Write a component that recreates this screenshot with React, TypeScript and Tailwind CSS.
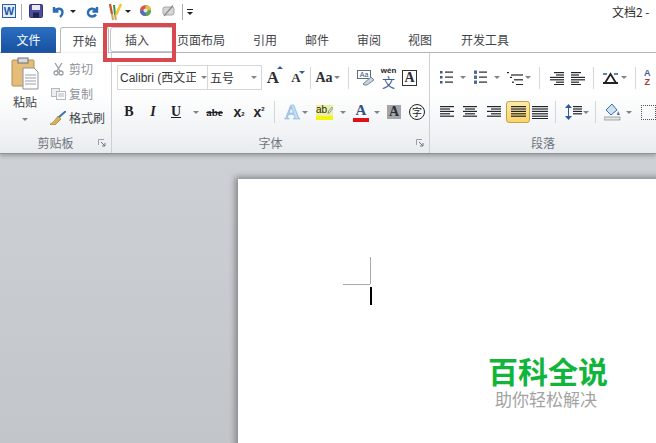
import React from "react";

const Caret = ({ className = "" }: { className?: string }) => (
  <span className={`block w-0 h-0 shrink-0 border-x-[3px] border-x-transparent border-t-[3px] border-t-[#7f8489] ${className}`} />
);

const Sep = ({ className = "" }: { className?: string }) => (
  <span className={`block w-px h-[22px] shrink-0 bg-[#d3d6da] ${className}`} />
);

const Launcher = () => (
  <svg width="8" height="8" viewBox="0 0 8 8">
    <path d="M0.5 6V0.5H6" stroke="#9aa0a6" fill="none" />
    <path d="M3 3L7 7M7 4V7H4" stroke="#6f767d" fill="none" />
  </svg>
);

// lines like the paragraph buttons: each item is x1,x2
const Lines = ({ rows, w = 15 }: { rows: [number, number][]; w?: number }) => (
  <svg className="block" width={w} height="14" viewBox={`0 0 ${w} 14`}>
    {rows.map(([a, b], i) => (
      <rect key={i} x={a} y={1 + i * 2.4} width={b - a} height="1.2" fill="#22262b" />
    ))}
  </svg>
);

const ListIcon = ({ kind }: { kind: "bullet" | "num" }) => (
  <svg className="block" width="13" height="15" viewBox="0 0 13 15">
    {[2, 7, 12].map((y) =>
      kind === "bullet" ? (
        <rect key={y} x="0" y={y - 1} width="2.5" height="2.5" fill="#3d5a80" />
      ) : (
        <rect key={y} x="0" y={y - 1.5} width="3" height="3.4" fill="#4c6a98" />
      )
    )}
    {[2, 7, 12].map((y) => (
      <rect key={y} x="5" y={y - 0.5} width="8" height="1.2" fill="#22262b" />
    ))}
  </svg>
);

const TopIcons = () => (
  <div className="flex items-center h-[26px] shrink-0 pl-[2px]">
    <div className="w-[14px] h-[14px] mt-[-4px] bg-[#e4edf8] border border-[#2a5fa8] flex items-center justify-center text-[11px] font-bold text-[#1d56a5] leading-none [font-family:'Liberation_Sans',sans-serif]">
      W
    </div>
    <span className="block w-px h-[16px] mt-[-2px] ml-[5px] bg-[#a9aeb5]" />
    <svg className="ml-[7px] mt-[-4px]" width="14" height="14" viewBox="0 0 14 14">
      <rect x="0.5" y="0.5" width="13" height="13" rx="1" fill="#4d4f9b" stroke="#31346f" />
      <rect x="3" y="1" width="8" height="5" fill="#e7e9f5" />
      <rect x="4" y="8.5" width="6" height="5" fill="#1f2250" />
    </svg>
    <svg className="ml-[9px] mt-[-4px]" width="13" height="13" viewBox="0 0 13 13">
      <path d="M2 2V6.5H6.5M2.5 6C5 2.5 10.5 3 10.5 7.5C10.5 9.5 9.5 10.8 8 12" stroke="#2b6cb5" strokeWidth="2.4" fill="none" />
    </svg>
    <Caret className="ml-[5px] mt-[-3px] border-t-[#222]" />
    <svg className="ml-[10px] mt-[-4px]" width="13" height="13" viewBox="0 0 13 13">
      <path d="M11 2V6.5H6.5M10.5 6C8 2.5 3 3 2 7C1.5 9.5 3.5 11.5 6 11.5C7.5 11.5 9 11 10 9.5" stroke="#2b6cb5" strokeWidth="2.4" fill="none" />
    </svg>
    <svg className="ml-[8px] mt-[-2px]" width="16" height="18" viewBox="0 0 16 18">
      <path d="M3 1L5 11" stroke="#c0562a" strokeWidth="2.2" />
      <path d="M7 2L8 12" stroke="#3f8f4e" strokeWidth="2" />
      <path d="M14 1L9 12" stroke="#f0c832" strokeWidth="2.6" />
      <path d="M5 11L6 17M8 12L9 17" stroke="#c9a75f" strokeWidth="2" />
    </svg>
    <Caret className="ml-[2px] mt-[-3px] border-t-[#222]" />
    <svg className="ml-[9px] mt-[-6px]" width="11" height="11" viewBox="0 0 11 11">
      <circle cx="5.5" cy="5.5" r="5.5" fill="#d9534f" />
      <path d="M5.5 5.5L5.5 0A5.5 5.5 0 0 1 11 5.5Z" fill="#e0c23a" />
      <path d="M5.5 5.5L11 5.5A5.5 5.5 0 0 1 5.5 11Z" fill="#4caf50" />
      <path d="M5.5 5.5L5.5 11A5.5 5.5 0 0 1 0 5.5Z" fill="#4b6fc9" />
      <circle cx="5.5" cy="5.5" r="2" fill="#e9e2ee" />
    </svg>
    <svg className="ml-[11px] mt-[-4px]" width="13" height="12" viewBox="0 0 13 12">
      <rect x="1" y="2" width="11" height="8" rx="2" fill="#d6d6d6" stroke="#a5a5a5" />
      <path d="M2 11L11 0.5" stroke="#8b8b8b" strokeWidth="1.2" />
    </svg>
    <span className="block w-px h-[16px] mt-[-2px] ml-[7px] bg-[#a9aeb5]" />
    <div className="ml-[4px] mt-[-2px] flex flex-col items-center gap-[2px]">
      <span className="block w-[6px] h-px bg-[#222]" />
      <Caret className="border-t-[#222]" />
    </div>
    <div className="ml-auto text-[12px] text-[#2d2d2d] whitespace-nowrap mt-[-2px] w-[44px]">
      文档2 -
    </div>
  </div>
);

const Tabs = () => {
  const plain = [
    { t: "页面布局", c: "w-[48px] ml-[1px]" },
    { t: "引用", c: "w-[24px] ml-[28px]" },
    { t: "邮件", c: "w-[24px] ml-[28px]" },
    { t: "审阅", c: "w-[24px] ml-[28px]" },
    { t: "视图", c: "w-[24px] ml-[27px]" },
    { t: "开发工具", c: "w-[48px] ml-[29px]" },
  ];
  return (
    <div className="flex items-end h-[27px] shrink-0 pl-px border-b border-[#b6babf] text-[12px] text-[#3f4448] leading-none">
      <div className="w-[55px] h-[26px] mb-[-1px] rounded-t-[3px] bg-gradient-to-b from-[#2b6fc2] to-[#17509f] text-white flex items-center justify-center">
        文件
      </div>
      <div className="ml-[4px] w-[49px] h-[26px] mb-[-1px] bg-white rounded-t-[3px] border border-b-0 border-[#b6babf] flex items-center justify-center">
        开始
      </div>
      <div className="ml-[1px] w-[66px] h-[25px] bg-white rounded-[3px] border border-[#c4c8cd] flex items-center pl-[14px]">
        插入
      </div>
      {plain.map((p) => (
        <div key={p.t} className={`h-[25px] flex items-center shrink-0 ${p.c}`}>
          {p.t}
        </div>
      ))}
    </div>
  );
};

const GroupLabel = ({ children, launcher }: { children: React.ReactNode; launcher?: boolean }) => (
  <div className="absolute left-0 right-0 bottom-0 h-[20px] flex items-center justify-center text-[12px] text-[#6f757c] leading-none">
    {children}
    {launcher && (
      <span className="absolute right-[5px] top-[6px]">
        <Launcher />
      </span>
    )}
  </div>
);

const ClipRow = ({ icon, label }: { icon: React.ReactNode; label: string }) => (
  <div className="flex items-center h-[24.5px]">
    <span className="w-[16px] flex justify-center">{icon}</span>
    <span className={`ml-[3px] text-[12px] leading-none ${label === "格式刷" ? "text-[#3f4448]" : "text-[#8d9298]"}`}>{label}</span>
  </div>
);

const Clipboard = () => (
  <div className="relative w-[112px] h-full border-r border-[#ccd0d5] shrink-0">
    <div className="flex pt-[4px] pl-[11px]">
      <div className="w-[28px] flex flex-col items-center">
        <svg width="28" height="33" viewBox="0 0 28 33">
          <rect x="1" y="3" width="22" height="26" rx="1" fill="#e5bd7a" stroke="#b58d4f" />
          <rect x="7" y="1" width="10" height="5" fill="#d8d9dc" stroke="#6e7176" />
          <path d="M12 11H23L27 15V32H12Z" fill="#fdfdfd" stroke="#8d929a" />
          <path d="M14 18H25M14 21H25M14 24H25M14 27H25" stroke="#9aa3ae" />
        </svg>
        <span className="mt-[6px] text-[12px] text-[#3f4448] leading-none">粘贴</span>
        <Caret className="mt-[10px]" />
      </div>
      <div className="ml-[11px]">
        <ClipRow
          label="剪切"
          icon={
            <svg width="11" height="13" viewBox="0 0 11 13">
              <path d="M2 0L7 8M9 0L4 8" stroke="#9a9ea3" strokeWidth="1.3" />
              <circle cx="3" cy="10" r="2" fill="none" stroke="#9a9ea3" strokeWidth="1.3" />
              <circle cx="8" cy="10" r="2" fill="none" stroke="#9a9ea3" strokeWidth="1.3" />
            </svg>
          }
        />
        <ClipRow
          label="复制"
          icon={
            <svg width="15" height="12" viewBox="0 0 15 12">
              <rect x="0.5" y="0.5" width="8" height="8" fill="#eceef0" stroke="#b4b8bd" />
              <rect x="5.5" y="3.5" width="9" height="8" fill="#fafafa" stroke="#b4b8bd" />
              <path d="M7 6H13M7 8H13" stroke="#b4b8bd" />
            </svg>
          }
        />
        <ClipRow
          label="格式刷"
          icon={
            <svg width="16" height="14" viewBox="0 0 16 14">
              <path d="M16 0L8 7" stroke="#3d6fae" strokeWidth="2" />
              <path d="M8 5L11 8L5 14H1L0 13C3 12 5 9 8 5Z" fill="#d8b25a" stroke="#8c7235" strokeWidth="0.6" />
            </svg>
          }
        />
      </div>
    </div>
    <GroupLabel launcher>剪贴板</GroupLabel>
  </div>
);

const Glyph = ({ className = "", children }: { className?: string; children: React.ReactNode }) => (
  <span className={`flex items-center justify-center shrink-0 leading-none ${className}`}>{children}</span>
);

const Font = () => (
  <div className="relative w-[318px] h-full border-r border-[#ccd0d5] shrink-0 [font-family:'Liberation_Serif',serif]">
    <div className="flex items-center h-[25px] mt-[12px] ml-[5px]">
      <div className="w-[91px] h-[25px] shrink-0 bg-white border border-[#d5d7da] flex items-center pl-[2px] text-[12px] text-[#33373b] [font-family:'Liberation_Sans','Noto_Sans_CJK_SC',sans-serif] whitespace-nowrap">
        <span className="w-[76px] overflow-hidden">Calibri (西文正</span>
        <Caret className="ml-[5px]" />
      </div>
      <div className="w-[54px] h-[25px] shrink-0 bg-white border border-l-0 border-[#d5d7da] flex items-center pl-[2px] text-[12px] text-[#33373b] [font-family:'Noto_Sans_CJK_SC',sans-serif]">
        <span className="w-[41px]">五号</span>
        <Caret />
      </div>
      <Glyph className="w-[20px] ml-[1px] text-[17px] font-bold text-[#2b2f36] relative">
        A<span className="absolute right-[0px] top-[-3px] block w-0 h-0 border-x-[3px] border-x-transparent border-b-[3px] border-b-[#2f5f9f]" />
      </Glyph>
      <Glyph className="w-[20px] ml-[3px] text-[13px] font-bold text-[#2b2f36] relative">
        A<span className="absolute right-[1px] top-[0px] block w-0 h-0 border-x-[3px] border-x-transparent border-t-[3px] border-t-[#2f5f9f]" />
      </Glyph>
      <Sep className="ml-[4px]" />
      <Glyph className="w-[18px] ml-[4px] text-[14px] font-bold text-[#2b2f36]">Aa</Glyph>
      <Caret className="ml-[1px]" />
      <Sep className="ml-[8px]" />
      <div className="relative ml-[8px] w-[17px] h-[17px] shrink-0">
        <span className="absolute left-0 top-[1px] w-[14px] h-[9px] border border-[#5f6b7a] bg-white text-[7px] leading-[7px] text-center text-[#34507f] [font-family:'Liberation_Sans',sans-serif]">Aa</span>
        <svg className="absolute left-0 top-0" width="17" height="17" viewBox="0 0 17 17">
          <path d="M6 15L14 8L17 11L10 16H7Z" fill="#c9d2dd" stroke="#7d8794" />
        </svg>
      </div>
      <div className="ml-[6px] w-[17px] flex flex-col items-center leading-none">
        <span className="text-[8px] h-[8px] font-bold text-[#222] [font-family:'Liberation_Sans',sans-serif]">wén</span>
        <span className="text-[13px] h-[13px] text-[#3c5a9a] [font-family:'Noto_Sans_CJK_SC',sans-serif]">文</span>
      </div>
      <Glyph className="ml-[5px] w-[15px] h-[16px] border border-[#333] text-[14px] font-bold text-[#2b2f36]">A</Glyph>
    </div>
    <div className="flex items-center h-[24px] mt-[10px] ml-[11px]">
      <Glyph className="w-[12px] text-[14px] font-bold text-[#1f2227]">B</Glyph>
      <Glyph className="w-[12px] ml-[12px] text-[14px] font-bold italic text-[#1f2227]">I</Glyph>
      <Glyph className="w-[12px] ml-[11px] text-[14px] font-bold underline text-[#1f2227]">U</Glyph>
      <Caret className="ml-[11px]" />
      <Glyph className="w-[17px] ml-[7px] text-[11px] font-bold line-through text-[#1f2227]">abe</Glyph>
      <Glyph className="w-[14px] ml-[9px] text-[14px] font-bold text-[#1f2227] [font-family:'Liberation_Sans',sans-serif]">
        x<sub className="text-[6px]">2</sub>
      </Glyph>
      <Glyph className="w-[14px] ml-[6px] text-[14px] font-bold text-[#1f2227] [font-family:'Liberation_Sans',sans-serif]">
        x<sup className="text-[6px]">2</sup>
      </Glyph>
      <Sep className="ml-[8px]" />
      <Glyph className="w-[18px] ml-[8px] text-[21px] font-bold text-[#c6def5] [-webkit-text-stroke:0.6px_#7fb0e0]">A</Glyph>
      <Caret className="ml-[1px]" />
      <div className="ml-[8px] w-[17px] flex flex-col leading-none">
        <div className="flex items-center h-[11px] bg-[#eef0a0]">
          <span className="text-[10px] text-[#222] [font-family:'Liberation_Sans',sans-serif]">ab</span>
          <svg width="7" height="9" viewBox="0 0 7 9">
            <path d="M1 8L2 5L6 0.5L7 2L3 7Z" fill="#dfe5ec" stroke="#47617f" strokeWidth="0.7" />
          </svg>
        </div>
        <span className="block h-[4px] bg-[#f3f312]" />
      </div>
      <Caret className="ml-[7px]" />
      <div className="ml-[7px] w-[16px] flex flex-col items-center leading-none">
        <span className="text-[15px] font-bold text-[#34507f]">A</span>
        <span className="block w-full h-[4px] bg-[#e0101a]" />
      </div>
      <Caret className="ml-[5px]" />
      <Glyph className="ml-[7px] w-[14px] h-[14px] bg-[#a3a5a7] text-[14px] font-bold text-[#2b2f36]">A</Glyph>
      <Glyph className="ml-[8px] w-[16px] h-[16px] rounded-full border border-[#222] text-[10px] text-[#222] [font-family:'Noto_Sans_CJK_SC',sans-serif]">字</Glyph>
    </div>
    <div className="[font-family:'Noto_Sans_CJK_SC',sans-serif]">
      <GroupLabel launcher>字体</GroupLabel>
    </div>
  </div>
);

const Paragraph = () => (
  <div className="relative grow h-full overflow-hidden">
    <div className="flex items-center h-[25px] mt-[12px] ml-[10px]">
      <ListIcon kind="bullet" />
      <Caret className="ml-[7px]" />
      <span className="ml-[8px]"><ListIcon kind="num" /></span>
      <Caret className="ml-[7px]" />
      <span className="ml-[7px]">
        <Lines w={17} rows={[[0, 2], [4, 16], [3, 5], [7, 16], [5, 7], [9, 16]]} />
      </span>
      <Caret className="ml-[1px]" />
      <Sep className="ml-[8px]" />
      <span className="ml-[9px]">
        <Lines w={15} rows={[[5, 15], [7, 15], [1, 15], [1, 15], [7, 15], [5, 15]]} />
      </span>
      <span className="ml-[7px]">
        <Lines w={15} rows={[[0, 10], [0, 8], [0, 14], [0, 14], [0, 8], [0, 10]]} />
      </span>
      <Sep className="ml-[7px]" />
      <svg className="ml-[8px] shrink-0" width="17" height="14" viewBox="0 0 17 14">
        <path d="M1 12H16M3 12L8.5 3L14 12" stroke="#222" strokeWidth="1.8" fill="none" />
        <path d="M1 3H5M12 3H16" stroke="#2b5c98" strokeWidth="1.6" />
      </svg>
      <Caret className="ml-[2px]" />
      <Sep className="ml-[8px]" />
      <div className="ml-[8px] flex flex-col items-center text-[9px] font-bold leading-[9px] text-[#3e5f93] [font-family:'Liberation_Sans',sans-serif]">
        <span>A</span>
        <span className="text-[#a83c3c]">Z</span>
      </div>
    </div>
    <div className="flex items-center h-[24px] mt-[10px] ml-[10px]">
      <Lines w={14} rows={[[0, 14], [0, 10], [0, 14], [0, 10], [0, 14]]} />
      <span className="ml-[9px]">
        <Lines w={15} rows={[[0, 14], [2, 12], [0, 14], [2, 12], [0, 14]]} />
      </span>
      <span className="ml-[9px]">
        <Lines w={14} rows={[[0, 14], [4, 14], [0, 14], [4, 14], [0, 14]]} />
      </span>
      <span className="ml-[5px] w-[24px] h-[22px] shrink-0 flex items-center justify-center rounded-[3px] border border-[#c2a24e] bg-gradient-to-b from-[#fde9a8] to-[#fbd467]">
        <Lines w={15} rows={[[0, 15], [0, 15], [0, 15], [0, 15], [0, 15]]} />
      </span>
      <span className="ml-[2px]">
        <Lines w={16} rows={[[0, 16], [0, 16], [0, 16], [0, 16], [0, 16], [0, 16]]} />
      </span>
      <Sep className="ml-[7px]" />
      <svg className="ml-[9px] shrink-0" width="7" height="16" viewBox="0 0 7 16">
        <path d="M3.5 0L7 4H0ZM3.5 16L0 12H7Z" fill="#2b5c98" />
        <rect x="3" y="4" width="1" height="8" fill="#2b5c98" />
      </svg>
      <span className="ml-[1px]"><Lines w={9} rows={[[0, 9], [0, 9], [0, 9], [0, 9]]} /></span>
      <Caret className="ml-[1px]" />
      <Sep className="ml-[6px]" />
      <svg className="ml-[8px] shrink-0" width="17" height="18" viewBox="0 0 17 18">
        <path d="M2 7L8 1L13 7L7 12Z" fill="#cfe0f1" stroke="#3d6fae" />
        <path d="M14 8L16 12H13Z" fill="#3d6fae" />
        <rect x="0" y="14" width="16" height="3" fill="#e3e5e8" stroke="#777" strokeWidth="0.6" />
      </svg>
      <Caret className="ml-[5px]" />
      <span className="ml-[9px] block w-[15px] h-[15px] shrink-0 border border-dotted border-[#555]" />
    </div>
    <div className="[font-family:'Noto_Sans_CJK_SC',sans-serif]">
      <GroupLabel>段落</GroupLabel>
    </div>
  </div>
);

export default function App() {
  return (
    <div className="relative w-[656px] h-[443px] overflow-hidden bg-white flex flex-col [font-family:'Noto_Sans_CJK_SC',sans-serif]">
      <TopIcons />
      <Tabs />
      <div className="relative z-10 flex h-[101px] shrink-0 bg-gradient-to-b from-white from-40% to-[#e9ecef] border-b border-[#8f9398] shadow-[0_2px_4px_#9a9ea3]">
        <Clipboard />
        <Font />
        <Paragraph />
      </div>
      <div className="grow min-h-0 bg-gradient-to-b from-[#cdd0d4] to-[#c2c5c9] pl-[238px] pt-[25px] overflow-hidden">
        <div className="relative w-[430px] h-[300px] bg-white shadow-[-3px_-2px_6px_#85898d]">
          <span className="absolute left-[105px] top-[105px] w-[27px] h-px bg-[#a9a9a9]" />
          <span className="absolute left-[132px] top-[78px] w-px h-[27px] bg-[#a9a9a9]" />
          <span className="absolute left-[132px] top-[108px] w-[2px] h-[18px] bg-black" />
          <div className="absolute left-[250px] top-[176px] flex flex-col items-start leading-none">
            <span className="text-[30px] h-[30px] font-bold text-[#11b53c] whitespace-nowrap">百科全说</span>
            <span className="mt-[5px] ml-[7px] text-[17px] h-[17px] text-[#a3a3a3] whitespace-nowrap">助你轻松解决</span>
          </div>
        </div>
      </div>
      <div className="absolute z-20 left-[103px] top-[23px] w-[73px] h-[39px] border-[4px] border-[#d9484e]" />
    </div>
  );
}
